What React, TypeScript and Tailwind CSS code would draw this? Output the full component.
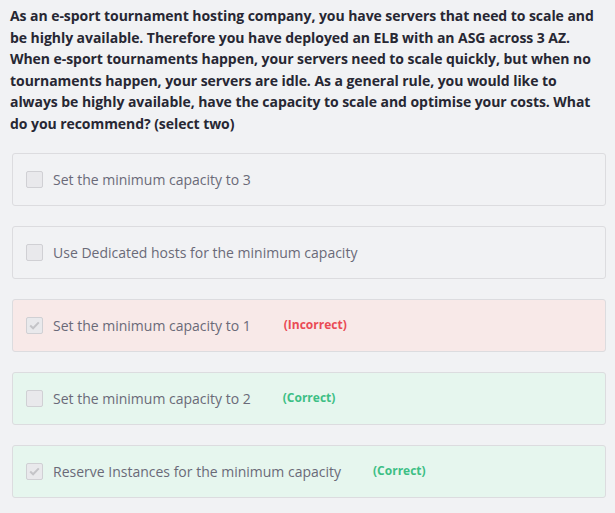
import React from 'react';

type Option = {
  label: string;
  checked: boolean;
  result?: 'correct' | 'incorrect';
};

const options: Option[] = [
  { label: 'Set the minimum capacity to 3', checked: false },
  { label: 'Use Dedicated hosts for the minimum capacity', checked: false },
  { label: 'Set the minimum capacity to 1', checked: true, result: 'incorrect' },
  { label: 'Set the minimum capacity to 2', checked: false, result: 'correct' },
  { label: 'Reserve Instances for the minimum capacity', checked: true, result: 'correct' },
];

// question wraps exactly as in the quiz page
const questionLines = [
  'As an e-sport tournament hosting company, you have servers that need to scale and',
  'be highly available. Therefore you have deployed an ELB with an ASG across 3 AZ.',
  'When e-sport tournaments happen, your servers need to scale quickly, but when no',
  'tournaments happen, your servers are idle. As a general rule, you would like to',
  'always be highly available, have the capacity to scale and optimise your costs. What',
  'do you recommend? (select two)',
];

function CheckBox({ checked }: { checked: boolean }) {
  return (
    <span className="flex h-[17px] w-[17px] shrink-0 items-center justify-center rounded-[2px] border border-[#d0d0d4] bg-[#e9e9ec]">
      {checked && (
        <svg width="11" height="9" viewBox="0 0 11 9" fill="none">
          <path d="M1.2 4.6 L4.1 7.3 L9.8 1.4" stroke="#c4c4c8" strokeWidth="2" />
        </svg>
      )}
    </span>
  );
}

function OptionRow({ option }: { option: Option }) {
  const bg =
    option.result === 'incorrect'
      ? 'bg-[#f8e9e8]'
      : option.result === 'correct'
        ? 'bg-[#e6f6ee]'
        : 'bg-[#f1f2f4]';

  return (
    <div className={`flex h-[53px] items-center rounded-[3px] border border-[#dcdcdf] pl-[13px] ${bg}`}>
      <CheckBox checked={option.checked} />
      <span className="ml-[10px] text-[14px] text-[#6a6a78]">{option.label}</span>
      {option.result === 'incorrect' && (
        <span className="ml-[33px] text-[12px] font-bold text-[#ea4b55]">(Incorrect)</span>
      )}
      {option.result === 'correct' && (
        <span className="ml-[32px] text-[12px] font-bold text-[#3dbf85]">(Correct)</span>
      )}
    </div>
  );
}

export default function App() {
  return (
    <div
      className="min-h-[513px] w-[615px] bg-[#f1f2f4] pl-[10px] pr-[6px] pt-[5px]"
      style={{ fontFamily: '"Open Sans", "Noto Sans", sans-serif' }}
    >
      <p className="whitespace-nowrap text-[14px] font-bold leading-[21.6px] tracking-[-0.06px] text-[#272733]">
        {questionLines.map((l, i) => (
          <React.Fragment key={i}>
            {l}
            {i < questionLines.length - 1 && <br />}
          </React.Fragment>
        ))}
      </p>
      <div className="ml-[2px] mr-[3px] mt-[18px] flex flex-col gap-[20px]">
        {options.map((o) => (
          <OptionRow key={o.label} option={o} />
        ))}
      </div>
    </div>
  );
}
